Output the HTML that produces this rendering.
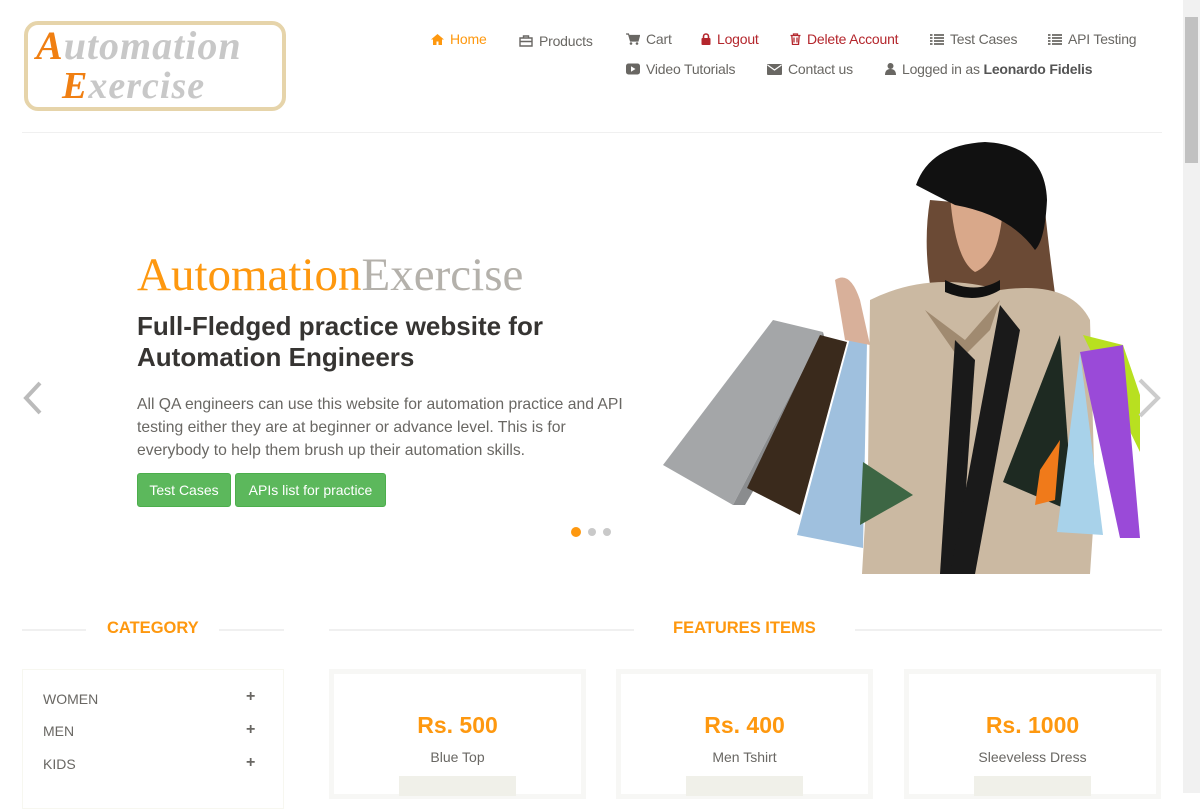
<!DOCTYPE html>
<html><head><meta charset="utf-8"><style>
*{box-sizing:border-box;margin:0;padding:0}
body{width:1200px;height:793px;overflow:hidden;background:#fff;font-family:"Liberation Sans",sans-serif;position:relative;color:#696763}
.abs{position:absolute}
.nav{font-size:14px;color:#696763;white-space:nowrap;letter-spacing:-0.2px}
.nav svg{vertical-align:-1px;margin-right:6px}
.btn{position:absolute;background:#5cb85c;color:#fff;font-size:14px;border-radius:3px;border:1px solid #4cae4c;text-align:center;line-height:32px;height:34px}
.card{position:absolute;top:669px;width:257px;height:130px;border:5px solid #f7f7f5;text-align:center}
.price{font-size:23px;font-weight:bold;color:#fe980f;margin-top:38px}
.pname{font-size:14px;color:#696763;margin-top:10px}
.atc{width:117px;height:20px;background:#f0f0e9;margin:11px auto 0}
.cat{position:absolute;left:43px;font-size:14px;color:#696763}
.plus{position:absolute;left:246px;font-size:16px;font-weight:bold;color:#696763}
</style></head><body>
<!-- logo -->
<div class="abs" style="left:24px;top:21px;width:262px;height:90px;border:4px solid #e6d4aa;border-radius:14px;background:#fff"></div>
<div class="abs" style="left:36px;top:24px;font-family:'Liberation Serif',serif;font-style:italic;font-weight:bold;font-size:40px;letter-spacing:1px;color:#c8c8c8;line-height:44px"><span style="color:#f07f12">A</span>utomation</div>
<div class="abs" style="left:62px;top:64px;font-family:'Liberation Serif',serif;font-style:italic;font-weight:bold;font-size:38px;letter-spacing:1px;color:#c8c8c8;line-height:44px"><span style="color:#f07f12">E</span>xercise</div>

<!-- nav -->
<div class="abs nav" style="left:431px;top:31px;color:#fe980f"><svg width="13" height="11" viewBox="0 0 13 11"><path d="M6.5 0L0 5.5h2V11h3.5V7.5h2V11H11V5.5h2z" fill="#fe980f"/></svg>Home</div>
<div class="abs nav" style="left:519px;top:33px"><svg width="14" height="12" viewBox="0 0 14 12"><path d="M4.5 3V1h5v2M1 3h12v8H1zM1 6.5h12" fill="none" stroke="#696763" stroke-width="1.4"/></svg>Products</div>
<div class="abs nav" style="left:626px;top:31px"><svg width="14" height="12" viewBox="0 0 14 12"><path d="M0 1h2.5l2 7h7.5l1.5-5.5H3.5" fill="#696763" stroke="#696763" stroke-width="1.2"/><circle cx="5" cy="10.5" r="1.3" fill="#696763"/><circle cx="11" cy="10.5" r="1.3" fill="#696763"/></svg>Cart</div>
<div class="abs nav" style="left:701px;top:31px;color:#b4262c"><svg width="10" height="12" viewBox="0 0 10 12"><path d="M2.5 5V3.5a2.5 2.5 0 0 1 5 0V5" fill="none" stroke="#b4262c" stroke-width="1.6"/><rect x="0.5" y="5" width="9" height="7" rx="1" fill="#b4262c"/></svg>Logout</div>
<div class="abs nav" style="left:790px;top:31px;color:#b4262c"><svg width="11" height="12" viewBox="0 0 11 12"><path d="M0.5 2.5h10M3.5 2.5V1h4v1.5M1.8 2.5l.7 9h6l.7-9M4 4.5v5M7 4.5v5" fill="none" stroke="#b4262c" stroke-width="1.3"/></svg>Delete Account</div>
<div class="abs nav" style="left:930px;top:31px"><svg width="14" height="11" viewBox="0 0 14 11"><path d="M0 1h2.5M4 1h10M0 4h2.5M4 4h10M0 7h2.5M4 7h10M0 10h2.5M4 10h10" stroke="#696763" stroke-width="1.8"/></svg>Test Cases</div>
<div class="abs nav" style="left:1048px;top:31px"><svg width="14" height="11" viewBox="0 0 14 11"><path d="M0 1h2.5M4 1h10M0 4h2.5M4 4h10M0 7h2.5M4 7h10M0 10h2.5M4 10h10" stroke="#696763" stroke-width="1.8"/></svg>API Testing</div>
<div class="abs nav" style="left:626px;top:61px"><svg width="14" height="12" viewBox="0 0 14 12"><rect x="0" y="0.5" width="14" height="11" rx="2.5" fill="#696763"/><path d="M5 3.3v5.4L9.5 6z" fill="#fff"/></svg>Video Tutorials</div>
<div class="abs nav" style="left:767px;top:61px"><svg width="15" height="11" viewBox="0 0 15 11"><rect x="0" y="0" width="15" height="11" rx="1" fill="#696763"/><path d="M0.5 1l7 5 7-5" fill="none" stroke="#fff" stroke-width="1.2"/></svg>Contact us</div>
<div class="abs nav" style="left:885px;top:61px"><svg width="11" height="12" viewBox="0 0 11 12"><circle cx="5.5" cy="3" r="3" fill="#696763"/><path d="M0 12c0-4 2-6 5.5-6S11 8 11 12z" fill="#696763"/></svg>Logged in as <b style="color:#545454">Leonardo Fidelis</b></div>

<div class="abs" style="left:22px;top:132px;width:1140px;height:1px;background:#f0f0f0"></div>

<!-- slider -->
<div class="abs" style="left:137px;top:248px;font-family:'Liberation Serif',serif;font-size:47px;line-height:54px;color:#fe980f;white-space:nowrap">Automation<span style="color:#b4b1ab">Exercise</span></div>
<div class="abs" style="left:137px;top:311px;font-size:26px;font-weight:bold;color:#363432;line-height:31px;width:480px">Full-Fledged practice website for Automation Engineers</div>
<div class="abs" style="left:137px;top:393px;font-size:15.7px;color:#696763;line-height:23px;width:495px">All QA engineers can use this website for automation practice and API testing either they are at beginner or advance level. This is for everybody to help them brush up their automation skills.</div>
<div class="btn" style="left:137px;top:473px;width:94px">Test Cases</div>
<div class="btn" style="left:235px;top:473px;width:151px">APIs list for practice</div>
<svg class="abs" style="left:22px;top:380px" width="22" height="36" viewBox="0 0 22 36"><path d="M18 3L4 18l14 15" fill="none" stroke="#bbb" stroke-width="4"/></svg>
<div class="abs" style="left:571px;top:527px;width:10px;height:10px;border-radius:50%;background:#fe980f"></div>
<div class="abs" style="left:588px;top:528px;width:8px;height:8px;border-radius:50%;background:#c9c9c9"></div>
<div class="abs" style="left:603px;top:528px;width:8px;height:8px;border-radius:50%;background:#c9c9c9"></div>

<!-- woman image -->
<svg class="abs" style="left:0;top:0" width="1200" height="793" viewBox="0 0 1200 793">
<path d="M930 200 Q920 260 940 330 L1060 330 Q1050 260 1045 210 Z" fill="#6b4a35"/>
<path d="M870 300 Q930 270 1000 290 Q1070 280 1090 320 L1095 500 L1090 574 L862 574 L868 470 Z" fill="#cbb9a2"/>
<path d="M925 310 L965 340 L1000 300 L990 330 L960 360 Z" fill="#a08a70"/>
<path d="M955 340 L940 574 L960 574 L975 360 Z" fill="#1a1a1a"/>
<path d="M1000 305 L1020 330 L975 574 L950 574 Z" fill="#1a1a1a"/>
<path d="M945 280 Q975 295 1000 280 L1000 290 Q975 305 945 292 Z" fill="#111"/>
<path d="M950 195 Q955 260 975 272 Q1000 262 1003 205 Z" fill="#d9a88a"/>
<path d="M916 185 Q930 145 985 142 Q1045 145 1047 200 Q1045 240 1035 250 Q1010 215 955 205 Q935 195 916 185 Z" fill="#111"/>
<path d="M663 465 L773 320 L823 332 L733 505 Z" fill="#a4a6a8"/>
<path d="M733 505 L823 332 L830 360 L745 505 Z" fill="#8a8c8e"/>
<path d="M747 488 L820 335 L847 342 L800 515 Z" fill="#3a2a1c"/>
<path d="M797 535 L850 338 L867 342 L863 548 Z" fill="#9fc0de"/>
<path d="M863 462 L913 495 L860 525 Z" fill="#3d6644"/>
<path d="M835 280 Q850 270 860 300 L870 345 L845 340 Z" fill="#d8b09a"/>
<path d="M1003 482 L1060 335 L1073 512 Z" fill="#1e2a22"/>
<path d="M1040 470 L1060 440 L1055 500 L1035 505 Z" fill="#f07a1a"/>
<path d="M1057 532 L1080 352 L1103 535 Z" fill="#a8d2ea"/>
<path d="M1083 335 L1123 345 L1140 395 L1140 452 Z" fill="#b8e020"/>
<path d="M1080 352 L1123 345 L1140 538 L1120 538 Z" fill="#9a4ad8"/>
<path d="M1140 380 L1158 398 L1140 416" fill="none" stroke="#ccc" stroke-width="4"/>
</svg>

<!-- category -->
<div class="abs" style="left:22px;top:629px;width:64px;height:2px;background:#f0f0f0"></div>
<div class="abs" style="left:219px;top:629px;width:65px;height:2px;background:#f0f0f0"></div>
<div class="abs" style="left:107px;top:619px;font-size:16.5px;font-weight:bold;color:#fe980f">CATEGORY</div>
<div class="abs" style="left:22px;top:669px;width:262px;height:140px;border:1px solid #f7f7f0"></div>
<div class="cat" style="top:691px">WOMEN</div><div class="plus" style="top:688px">+</div>
<div class="cat" style="top:723px">MEN</div><div class="plus" style="top:721px">+</div>
<div class="cat" style="top:756px">KIDS</div><div class="plus" style="top:754px">+</div>

<!-- features -->
<div class="abs" style="left:329px;top:629px;width:305px;height:2px;background:#f0f0f0"></div>
<div class="abs" style="left:855px;top:629px;width:307px;height:2px;background:#f0f0f0"></div>
<div class="abs" style="left:673px;top:619px;font-size:16.5px;font-weight:bold;color:#fe980f">FEATURES ITEMS</div>
<div class="card" style="left:329px"><div class="price">Rs. 500</div><div class="pname">Blue Top</div><div class="atc"></div></div>
<div class="card" style="left:616px"><div class="price">Rs. 400</div><div class="pname">Men Tshirt</div><div class="atc"></div></div>
<div class="card" style="left:904px"><div class="price">Rs. 1000</div><div class="pname">Sleeveless Dress</div><div class="atc"></div></div>

<!-- scrollbar -->
<div class="abs" style="left:1183px;top:0;width:17px;height:793px;background:#f1f1f1"></div>
<div class="abs" style="left:1185px;top:17px;width:13px;height:146px;background:#c1c1c1"></div>
</body></html>
